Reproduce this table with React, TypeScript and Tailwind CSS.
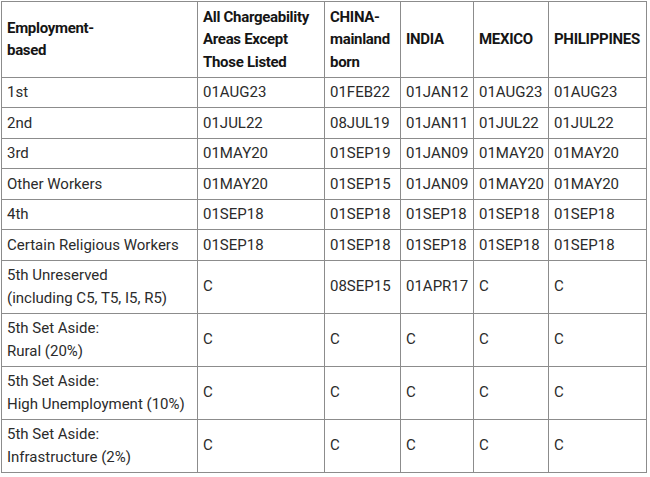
const header = [
  'Employment-\nbased',
  'All Chargeability\nAreas Except\nThose Listed',
  'CHINA-\nmainland\nborn',
  'INDIA',
  'MEXICO',
  'PHILIPPINES',
];

const rows: string[][] = [
  ['1st', '01AUG23', '01FEB22', '01JAN12', '01AUG23', '01AUG23'],
  ['2nd', '01JUL22', '08JUL19', '01JAN11', '01JUL22', '01JUL22'],
  ['3rd', '01MAY20', '01SEP19', '01JAN09', '01MAY20', '01MAY20'],
  ['Other Workers', '01MAY20', '01SEP15', '01JAN09', '01MAY20', '01MAY20'],
  ['4th', '01SEP18', '01SEP18', '01SEP18', '01SEP18', '01SEP18'],
  ['Certain Religious Workers', '01SEP18', '01SEP18', '01SEP18', '01SEP18', '01SEP18'],
  ['5th Unreserved\n(including C5, T5, I5, R5)', 'C', '08SEP15', '01APR17', 'C', 'C'],
  ['5th Set Aside:\nRural (20%)', 'C', 'C', 'C', 'C', 'C'],
  ['5th Set Aside:\nHigh Unemployment (10%)', 'C', 'C', 'C', 'C', 'C'],
  ['5th Set Aside:\nInfrastructure (2%)', 'C', 'C', 'C', 'C', 'C'],
];

function Lines({ text }: { text: string }) {
  return (
    <>
      {text.split('\n').map((line, i) => (
        <div key={i} className="whitespace-nowrap">{line}</div>
      ))}
    </>
  );
}

export default function App() {
  return (
    <div className="w-[650px] h-[477px] bg-white pt-px pl-px" style={{ fontFamily: 'Roboto, "Liberation Sans", sans-serif' }}>
      <table className="w-[645px] table-fixed border-collapse text-[15px] leading-[22.5px] text-[#2b2b2b]">
        <colgroup>
          <col className="w-[196px]" />
          <col className="w-[127px]" />
          <col className="w-[76px]" />
          <col className="w-[73px]" />
          <col className="w-[75px]" />
          <col className="w-[98px]" />
        </colgroup>
        <thead>
          <tr>
            {header.map((h, i) => (
              <th
                key={i}
                className="border border-[#8c8c8c] px-[5px] py-[3.5px] text-left align-middle font-bold tracking-[-0.02em] text-[#151515]"
              >
                <Lines text={h} />
              </th>
            ))}
          </tr>
        </thead>
        <tbody>
          {rows.map((r, ri) => (
            <tr key={ri}>
              {r.map((c, ci) => (
                <td key={ci} className="border border-[#8c8c8c] px-[5px] py-[3.5px] align-middle">
                  <Lines text={c} />
                </td>
              ))}
            </tr>
          ))}
        </tbody>
      </table>
    </div>
  );
}
